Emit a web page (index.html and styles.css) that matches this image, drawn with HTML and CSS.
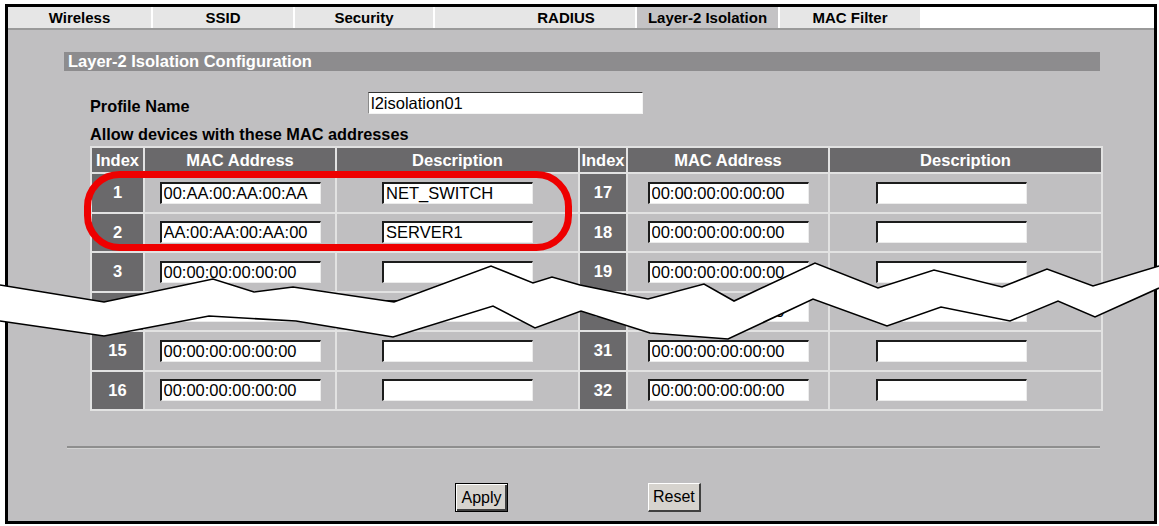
FILE: index.html
```html
<!DOCTYPE html>
<html>
<head>
<meta charset="utf-8">
<title>Layer-2 Isolation</title>
<link rel="stylesheet" href="styles.css">
</head>
<body>
<div class="page">
  <div class="frame">
    <nav class="tabs">
      <div class="tab w1">Wireless</div>
      <div class="tab w2">SSID</div>
      <div class="tab w3">Security</div>
      <div class="tab w4 radius">RADIUS</div>
      <div class="tab w5 active">Layer-2 Isolation</div>
      <div class="tab w6">MAC Filter</div>
    </nav>
    <main class="content">
      <div class="section-title">Layer-2 Isolation Configuration</div>
      <div class="profile-row">
        <span class="label profile-label">Profile Name</span>
        <input class="field profile-input" type="text" value="l2isolation01">
      </div>
      <div class="label allow">Allow devices with these MAC addresses</div>
      <table class="mac-table">
        <colgroup>
          <col class="c-idx-l"><col class="c-mac-l"><col class="c-desc-l">
          <col class="c-idx-r"><col class="c-mac-r"><col class="c-desc-r">
        </colgroup>
        <tr class="head">
          <th>Index</th><th>MAC Address</th><th>Description</th>
          <th>Index</th><th>MAC Address</th><th>Description</th>
        </tr>
        <tr class="row">
          <td class="idx">1</td>
          <td class="cell"><input class="field mac" type="text" value="00:AA:00:AA:00:AA"></td>
          <td class="cell"><input class="field desc" type="text" value="NET_SWITCH"></td>
          <td class="idx">17</td>
          <td class="cell"><input class="field mac" type="text" value="00:00:00:00:00:00"></td>
          <td class="cell right-desc"><input class="field desc" type="text" value=""></td>
        </tr>
        <tr class="row">
          <td class="idx">2</td>
          <td class="cell"><input class="field mac" type="text" value="AA:00:AA:00:AA:00"></td>
          <td class="cell"><input class="field desc" type="text" value="SERVER1"></td>
          <td class="idx">18</td>
          <td class="cell"><input class="field mac" type="text" value="00:00:00:00:00:00"></td>
          <td class="cell right-desc"><input class="field desc" type="text" value=""></td>
        </tr>
        <tr class="row">
          <td class="idx">3</td>
          <td class="cell"><input class="field mac" type="text" value="00:00:00:00:00:00"></td>
          <td class="cell"><input class="field desc" type="text" value=""></td>
          <td class="idx">19</td>
          <td class="cell"><input class="field mac" type="text" value="00:00:00:00:00:00"></td>
          <td class="cell right-desc"><input class="field desc" type="text" value=""></td>
        </tr>
        <tr class="row">
          <td class="idx">14</td>
          <td class="cell"><input class="field mac" type="text" value="00:00:00:00:00:00"></td>
          <td class="cell"><input class="field desc" type="text" value=""></td>
          <td class="idx">30</td>
          <td class="cell"><input class="field mac" type="text" value="00:00:00:00:00:00"></td>
          <td class="cell right-desc"><input class="field desc" type="text" value=""></td>
        </tr>
        <tr class="row">
          <td class="idx">15</td>
          <td class="cell"><input class="field mac" type="text" value="00:00:00:00:00:00"></td>
          <td class="cell"><input class="field desc" type="text" value=""></td>
          <td class="idx">31</td>
          <td class="cell"><input class="field mac" type="text" value="00:00:00:00:00:00"></td>
          <td class="cell right-desc"><input class="field desc" type="text" value=""></td>
        </tr>
        <tr class="row">
          <td class="idx">16</td>
          <td class="cell"><input class="field mac" type="text" value="00:00:00:00:00:00"></td>
          <td class="cell"><input class="field desc" type="text" value=""></td>
          <td class="idx">32</td>
          <td class="cell"><input class="field mac" type="text" value="00:00:00:00:00:00"></td>
          <td class="cell right-desc"><input class="field desc" type="text" value=""></td>
        </tr>
      </table>
      <hr class="sep">
      <div class="buttons">
        <button class="btn default" type="button">Apply</button>
        <button class="btn" type="button">Reset</button>
      </div>
    </main>
  </div>

  <svg class="overlay" width="1159" height="526" viewBox="0 0 1159 526" aria-hidden="true">
    <rect x="87.5" y="174.5" width="481" height="73" rx="32" ry="32" fill="none" stroke="#ee0000" stroke-width="7"/>
  </svg>

  <svg class="overlay" width="1159" height="526" viewBox="0 0 1159 526" aria-hidden="true">
    <polygon fill="#ffffff" points="0,285 104,302 213,279 254,292 293,287 394,302 491,266 533,283 552,277 580,285 648,299 704,284 734,301 815,263 878,288 934,270 1002,287 1047,269 1093,286 1159,266 1159,288 1095,317 1058,301 1010,321 941,307 887,326 813,299 728,339 650,333 581,311 535,328 493,306 393,337 296,321 209,316 104,336 0,321"/>
    <polyline fill="none" stroke="#000" stroke-width="1.6" stroke-linejoin="miter" points="0,285 104,302 213,279 254,292 293,287 394,302 491,266 533,283 552,277 580,285 648,299 704,284 734,301 815,263 878,288 934,270 1002,287 1047,269 1093,286 1159,266"/>
    <polyline fill="none" stroke="#000" stroke-width="1.6" stroke-linejoin="miter" points="0,321 104,336 209,316 296,321 393,337 493,306 535,328 581,311 650,333 728,339 813,299 887,326 941,307 1010,321 1058,301 1095,317 1159,288"/>
  </svg>
</div>
</body>
</html>
```

FILE: styles.css
```css
html, body {
  margin: 0;
  padding: 0;
  background: #ffffff;
}

body {
  font-family: "Liberation Sans", Arial, sans-serif;
  color: #000;
}

.page {
  position: relative;
  width: 1159px;
  height: 526px;
  overflow: hidden;
}

.frame {
  margin: 4px 0 0 5px;
  width: 1152px;
  height: 520px;
  box-sizing: border-box;
  border: 3px solid #000;
  background: #c0bfc1;
  display: flex;
  flex-direction: column;
}

/* Tabs */
.tabs {
  display: flex;
  gap: 2px;
  height: 21px;
  background: #ffffff;
  border-bottom: 2px solid #9a9a9a;
  flex: none;
}

.tab {
  background: #e6e6e6;
  font-weight: bold;
  font-size: 15px;
  display: flex;
  align-items: center;
  justify-content: center;
  box-sizing: border-box;
}

.w1 { width: 143px; }
.w2 { width: 140px; }
.w3 { width: 138px; }
.w4 { width: 200px; }
.w5 { width: 141px; }
.w6 { width: 140px; }

.radius { padding-left: 62px; }

.tab.active {
  background: #c4c3c5;
}

/* Content */
.content {
  padding: 22px 54px 0 56px;
}

.section-title {
  height: 19px;
  line-height: 19px;
  background: #8d8c8e;
  color: #ffffff;
  font-weight: bold;
  font-size: 16.5px;
  padding-left: 4px;
}

.label {
  font-weight: bold;
  font-size: 16.3px;
  line-height: 20px;
}

.profile-row {
  margin-top: 21px;
  padding-left: 26px;
  display: grid;
  grid-template-columns: 278px 275px;
  align-items: start;
  height: 22px;
}

.profile-label {
  padding-top: 4px;
}

.allow {
  margin-top: 10px;
  padding-left: 26px;
}

.field {
  box-sizing: border-box;
  height: 22px;
  margin: 0;
  padding: 0 2px;
  background: #ffffff;
  border-style: solid;
  border-width: 2px 1px 1px 2px;
  border-color: #1c1c1c #ececec #ececec #1c1c1c;
  font-family: "Liberation Sans", Arial, sans-serif;
  font-size: 16.5px;
  color: #000;
  outline: none;
}

.profile-input {
  width: 275px;
  border-width: 1px 1px 1px 1px;
  border-color: #333 #f4f4f4 #f4f4f4 #8a8a8a;
}

/* Table */
.mac-table {
  margin-top: 2px;
  margin-left: 26px;
  width: 1011px;
  border-collapse: collapse;
  table-layout: fixed;
}

.c-idx-l { width: 53px; }
.c-mac-l { width: 192px; }
.c-desc-l { width: 243px; }
.c-idx-r { width: 48px; }
.c-mac-r { width: 202px; }
.c-desc-r { width: 273px; }

.mac-table th,
.mac-table td {
  border: 2px solid #e2e2e2;
  padding: 0;
}

.mac-table tr.head {
  height: 26px;
}

.mac-table th {
  background: #6a696b;
  color: #ffffff;
  font-weight: bold;
  font-size: 16.5px;
  text-align: center;
  white-space: nowrap;
  overflow: hidden;
}

.mac-table tr.row {
  height: 39.5px;
}

.mac-table td.idx {
  background: #6a696b;
  color: #ffffff;
  font-weight: bold;
  font-size: 16.5px;
  text-align: center;
}

.mac-table td.cell {
  text-align: center;
  vertical-align: middle;
}

.mac-table td.right-desc {
  padding-right: 28px;
}

.mac { width: 161px; }
.desc { width: 151px; }

/* Separator and buttons */
.sep {
  margin: 35px 0 0 3px;
  height: 0;
  border: 0;
  border-top: 2px solid #8e8e8e;
  border-bottom: 1px solid #d2d2d2;
}

.buttons {
  margin-top: 34px;
  padding-left: 391px;
  display: flex;
  gap: 140px;
}

.btn {
  box-sizing: border-box;
  height: 29px;
  min-width: 52px;
  padding: 0 4px;
  background: #d6d3ce;
  font-family: "Liberation Sans", Arial, sans-serif;
  font-size: 16px;
  color: #000;
  border-style: solid;
  border-width: 1px 2px 2px 1px;
  border-color: #ffffff #404040 #404040 #ffffff;
}

.btn.default {
  min-width: 53px;
  border: 1px solid #000;
  box-shadow: inset 1px 1px 0 #ffffff, inset -2px -2px 0 #404040;
}

/* Overlays: annotation highlight and page-break zigzag */
.overlay {
  position: absolute;
  left: 0;
  top: 0;
  pointer-events: none;
}
```
